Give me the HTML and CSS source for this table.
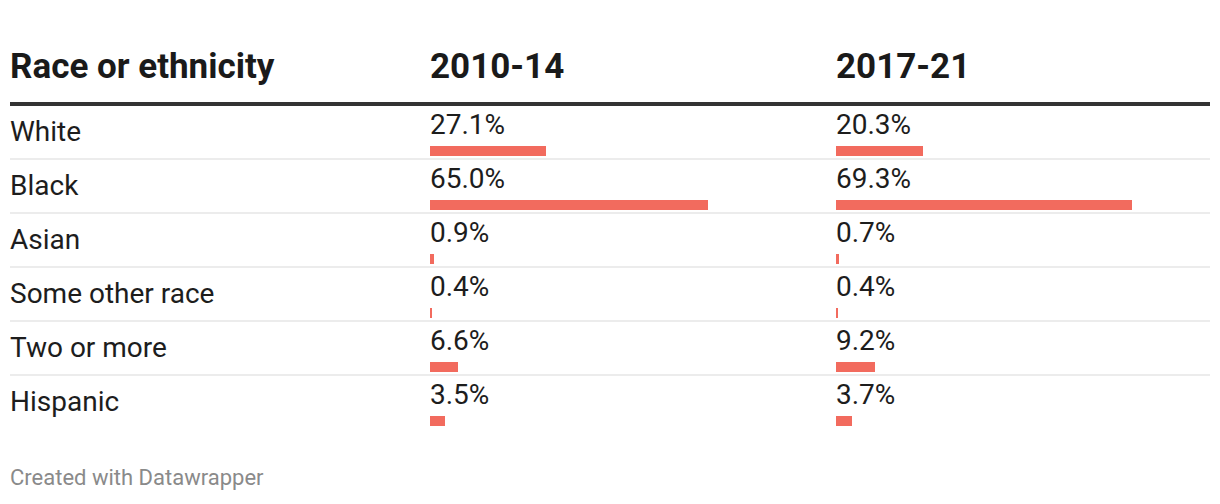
FILE: index.html
```html
<!DOCTYPE html>
<html>
<head>
<meta charset="utf-8">
<link rel="stylesheet" href="styles.css">
</head>
<body>
<div class="chart">
  <div class="row head">
    <div class="cell">Race or ethnicity</div>
    <div class="cell">2010-14</div>
    <div class="cell">2017-21</div>
  </div>
  <div class="row">
    <div class="label">White</div>
    <div class="val"><div class="num">27.1%</div><div class="bar" style="width:115.8px"></div></div>
    <div class="val"><div class="num">20.3%</div><div class="bar" style="width:86.7px"></div></div>
  </div>
  <div class="row">
    <div class="label">Black</div>
    <div class="val"><div class="num">65.0%</div><div class="bar" style="width:277.7px"></div></div>
    <div class="val"><div class="num">69.3%</div><div class="bar" style="width:296px"></div></div>
  </div>
  <div class="row">
    <div class="label">Asian</div>
    <div class="val"><div class="num">0.9%</div><div class="bar" style="width:3.8px"></div></div>
    <div class="val"><div class="num">0.7%</div><div class="bar" style="width:3px"></div></div>
  </div>
  <div class="row">
    <div class="label">Some other race</div>
    <div class="val"><div class="num">0.4%</div><div class="bar" style="width:1.7px"></div></div>
    <div class="val"><div class="num">0.4%</div><div class="bar" style="width:1.7px"></div></div>
  </div>
  <div class="row">
    <div class="label">Two or more</div>
    <div class="val"><div class="num">6.6%</div><div class="bar" style="width:28.2px"></div></div>
    <div class="val"><div class="num">9.2%</div><div class="bar" style="width:39.3px"></div></div>
  </div>
  <div class="row last">
    <div class="label">Hispanic</div>
    <div class="val"><div class="num">3.5%</div><div class="bar" style="width:15px"></div></div>
    <div class="val"><div class="num">3.7%</div><div class="bar" style="width:15.8px"></div></div>
  </div>
  <div class="footer">Created with Datawrapper</div>
</div>
</body>
</html>
```
FILE: styles.css
```css
html, body {
  margin: 0;
  padding: 0;
  background: #ffffff;
}
body {
  font-family: Roboto, "Liberation Sans", sans-serif;
  color: #1d1d1d;
}
.chart {
  width: 1200px;
  padding: 0 10px;
}
.row {
  display: grid;
  grid-template-columns: 420px 406px 1fr;
  height: 52px;
  border-bottom: 2px solid #ececec;
}
.row.last {
  border-bottom: none;
}
.row.head {
  height: auto;
  padding-top: 47px;
  padding-bottom: 15px;
  border-bottom: 4px solid #333333;
}
.head .cell {
  font-size: 35px;
  font-weight: 700;
  line-height: 40px;
  color: #1a1a1a;
}
.label {
  font-size: 28px;
  line-height: 32px;
  padding-top: 10.4px;
}
.val {
  padding-top: 3.4px;
}
.num {
  font-size: 28px;
  line-height: 32px;
}
.bar {
  height: 10px;
  margin-top: 4.6px;
  background: #f26b5e;
}
.footer {
  margin-top: 36.5px;
  font-size: 22px;
  line-height: 26px;
  color: #8a8a8a;
}
```
